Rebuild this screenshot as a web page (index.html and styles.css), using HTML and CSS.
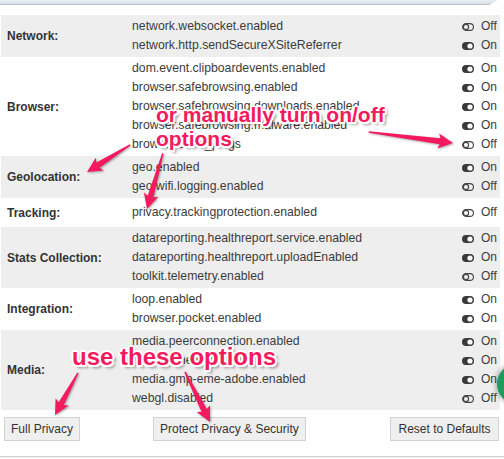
FILE: index.html
```html
<!DOCTYPE html>
<html>
<head>
<meta charset="utf-8">
<link rel="stylesheet" href="styles.css">
</head>
<body>
<div class="topbar"></div>
<div class="panel">
  <div class="section grey">
    <div class="label">Network:</div>
    <div class="rows">
      <div class="row"><span class="pref">network.websocket.enabled</span><span class="state"><svg class="tg" viewBox="0 0 12 8"><rect x="0.6" y="0.6" width="10.8" height="6.8" rx="3.4" fill="none" stroke="#444" stroke-width="1.1"/><circle cx="4" cy="4" r="2.6" fill="none" stroke="#444" stroke-width="1.1"/></svg>Off</span></div>
      <div class="row"><span class="pref">network.http.sendSecureXSiteReferrer</span><span class="state"><svg class="tg" viewBox="0 0 12 8"><rect x="0" y="0" width="12" height="8" rx="4" fill="#3a3a3a"/><circle cx="8" cy="4" r="2.6" fill="#fff"/></svg>On</span></div>
    </div>
  </div>
  <div class="section">
    <div class="label">Browser:</div>
    <div class="rows">
      <div class="row"><span class="pref">dom.event.clipboardevents.enabled</span><span class="state"><svg class="tg" viewBox="0 0 12 8"><rect x="0" y="0" width="12" height="8" rx="4" fill="#3a3a3a"/><circle cx="8" cy="4" r="2.6" fill="#fff"/></svg>On</span></div>
      <div class="row"><span class="pref">browser.safebrowsing.enabled</span><span class="state"><svg class="tg" viewBox="0 0 12 8"><rect x="0" y="0" width="12" height="8" rx="4" fill="#3a3a3a"/><circle cx="8" cy="4" r="2.6" fill="#fff"/></svg>On</span></div>
      <div class="row"><span class="pref">browser.safebrowsing.downloads.enabled</span><span class="state"><svg class="tg" viewBox="0 0 12 8"><rect x="0" y="0" width="12" height="8" rx="4" fill="#3a3a3a"/><circle cx="8" cy="4" r="2.6" fill="#fff"/></svg>On</span></div>
      <div class="row"><span class="pref">browser.safebrowsing.malware.enabled</span><span class="state"><svg class="tg" viewBox="0 0 12 8"><rect x="0" y="0" width="12" height="8" rx="4" fill="#3a3a3a"/><circle cx="8" cy="4" r="2.6" fill="#fff"/></svg>On</span></div>
      <div class="row"><span class="pref">browser.send_pings</span><span class="state"><svg class="tg" viewBox="0 0 12 8"><rect x="0.6" y="0.6" width="10.8" height="6.8" rx="3.4" fill="none" stroke="#444" stroke-width="1.1"/><circle cx="4" cy="4" r="2.6" fill="none" stroke="#444" stroke-width="1.1"/></svg>Off</span></div>
    </div>
  </div>
  <div class="section grey">
    <div class="label">Geolocation:</div>
    <div class="rows">
      <div class="row"><span class="pref">geo.enabled</span><span class="state"><svg class="tg" viewBox="0 0 12 8"><rect x="0" y="0" width="12" height="8" rx="4" fill="#3a3a3a"/><circle cx="8" cy="4" r="2.6" fill="#fff"/></svg>On</span></div>
      <div class="row"><span class="pref">geo.wifi.logging.enabled</span><span class="state"><svg class="tg" viewBox="0 0 12 8"><rect x="0.6" y="0.6" width="10.8" height="6.8" rx="3.4" fill="none" stroke="#444" stroke-width="1.1"/><circle cx="4" cy="4" r="2.6" fill="none" stroke="#444" stroke-width="1.1"/></svg>Off</span></div>
    </div>
  </div>
  <div class="section single">
    <div class="label">Tracking:</div>
    <div class="rows">
      <div class="row"><span class="pref">privacy.trackingprotection.enabled</span><span class="state"><svg class="tg" viewBox="0 0 12 8"><rect x="0.6" y="0.6" width="10.8" height="6.8" rx="3.4" fill="none" stroke="#444" stroke-width="1.1"/><circle cx="4" cy="4" r="2.6" fill="none" stroke="#444" stroke-width="1.1"/></svg>Off</span></div>
    </div>
  </div>
  <div class="section grey">
    <div class="label">Stats Collection:</div>
    <div class="rows">
      <div class="row"><span class="pref">datareporting.healthreport.service.enabled</span><span class="state"><svg class="tg" viewBox="0 0 12 8"><rect x="0" y="0" width="12" height="8" rx="4" fill="#3a3a3a"/><circle cx="8" cy="4" r="2.6" fill="#fff"/></svg>On</span></div>
      <div class="row"><span class="pref">datareporting.healthreport.uploadEnabled</span><span class="state"><svg class="tg" viewBox="0 0 12 8"><rect x="0" y="0" width="12" height="8" rx="4" fill="#3a3a3a"/><circle cx="8" cy="4" r="2.6" fill="#fff"/></svg>On</span></div>
      <div class="row"><span class="pref">toolkit.telemetry.enabled</span><span class="state"><svg class="tg" viewBox="0 0 12 8"><rect x="0.6" y="0.6" width="10.8" height="6.8" rx="3.4" fill="none" stroke="#444" stroke-width="1.1"/><circle cx="4" cy="4" r="2.6" fill="none" stroke="#444" stroke-width="1.1"/></svg>Off</span></div>
    </div>
  </div>
  <div class="section">
    <div class="label">Integration:</div>
    <div class="rows">
      <div class="row"><span class="pref">loop.enabled</span><span class="state"><svg class="tg" viewBox="0 0 12 8"><rect x="0" y="0" width="12" height="8" rx="4" fill="#3a3a3a"/><circle cx="8" cy="4" r="2.6" fill="#fff"/></svg>On</span></div>
      <div class="row"><span class="pref">browser.pocket.enabled</span><span class="state"><svg class="tg" viewBox="0 0 12 8"><rect x="0" y="0" width="12" height="8" rx="4" fill="#3a3a3a"/><circle cx="8" cy="4" r="2.6" fill="#fff"/></svg>On</span></div>
    </div>
  </div>
  <div class="section grey">
    <div class="label">Media:</div>
    <div class="rows">
      <div class="row"><span class="pref">media.peerconnection.enabled</span><span class="state"><svg class="tg" viewBox="0 0 12 8"><rect x="0" y="0" width="12" height="8" rx="4" fill="#3a3a3a"/><circle cx="8" cy="4" r="2.6" fill="#fff"/></svg>On</span></div>
      <div class="row"><span class="pref">media.eme.enabled</span><span class="state"><svg class="tg" viewBox="0 0 12 8"><rect x="0" y="0" width="12" height="8" rx="4" fill="#3a3a3a"/><circle cx="8" cy="4" r="2.6" fill="#fff"/></svg>On</span></div>
      <div class="row"><span class="pref">media.gmp-eme-adobe.enabled</span><span class="state"><svg class="tg" viewBox="0 0 12 8"><rect x="0" y="0" width="12" height="8" rx="4" fill="#3a3a3a"/><circle cx="8" cy="4" r="2.6" fill="#fff"/></svg>On</span></div>
      <div class="row"><span class="pref">webgl.disabled</span><span class="state"><svg class="tg" viewBox="0 0 12 8"><rect x="0.6" y="0.6" width="10.8" height="6.8" rx="3.4" fill="none" stroke="#444" stroke-width="1.1"/><circle cx="4" cy="4" r="2.6" fill="none" stroke="#444" stroke-width="1.1"/></svg>Off</span></div>
    </div>
  </div>
  <div class="buttons">
    <button class="btn">Full Privacy</button>
    <button class="btn mid">Protect Privacy &amp; Security</button>
    <button class="btn reset">Reset to Defaults</button>
  </div>
</div>
<div class="footer"></div>

<div class="green-dot"></div>

<svg class="arrows" width="504" height="459" viewBox="0 0 504 459">
  <g fill="#f31a5e">
    <path transform="translate(87 172) rotate(147.9)" d="M-51 -0.7 L-13 -3 L-15 -7.5 L0 0 L-15 7.5 L-13 3 L-51 0.7 Z"/>
    <path transform="translate(147 209) rotate(105.9)" d="M-58 -0.7 L-13 -3 L-15 -7.5 L0 0 L-15 7.5 L-13 3 L-58 0.7 Z"/>
    <path transform="translate(453 143) rotate(7.46)" d="M-85 -0.7 L-13 -3 L-15 -7.5 L0 0 L-15 7.5 L-13 3 L-85 0.7 Z"/>
    <path transform="translate(55 415) rotate(118.7)" d="M-48 -0.7 L-13 -3 L-15 -7.5 L0 0 L-15 7.5 L-13 3 L-48 0.7 Z"/>
    <path transform="translate(210 422) rotate(63.4)" d="M-56 -0.7 L-13 -3 L-15 -7.5 L0 0 L-15 7.5 L-13 3 L-56 0.7 Z"/>
  </g>
</svg>
<div class="note note1">or manually turn on/off<br>options</div>
<div class="note note2">use these options</div>
</body>
</html>
```

FILE: styles.css
```css
html, body {
  margin: 0;
  padding: 0;
}
body {
  width: 504px;
  height: 459px;
  position: relative;
  overflow: hidden;
  background: #fff;
  font-family: "Liberation Sans", Arial, sans-serif;
  font-size: 12px;
  color: #3c3c3c;
}
.topbar {
  height: 4px;
  background: linear-gradient(#e9eef3, #d6dee7);
  border-bottom: 1px solid #b7c2ce;
  clip-path: polygon(0 0, 498px 0, 489px 100%, 0 100%);
}
.panel {
  padding: 10px 4px 0 1px;
}
.section {
  display: grid;
  grid-template-columns: 131px 1fr;
  padding: 2px 0;
  box-sizing: border-box;
  min-height: 29px;
}
.section.grey {
  background: #eeeeee;
}
.label {
  align-self: center;
  padding-left: 6px;
  font-weight: bold;
  color: #333;
}
.section.single .rows {
  align-self: center;
}
.row {
  display: flex;
  height: 19px;
  line-height: 19px;
  white-space: nowrap;
}
.pref {
  width: 330px;
  font-size: 12.25px;
}
.state {
  display: flex;
  align-items: center;
}
.tg {
  width: 12px;
  height: 8px;
  margin-right: 7px;
}
.buttons {
  display: flex;
  margin-top: 7px;
  padding: 0 1px 0 3px;
}
.btn {
  height: 24px;
  padding: 0 6px;
  border: 1px solid #d2d2d2;
  background: #efefef;
  font-family: "Liberation Sans", Arial, sans-serif;
  font-size: 12px;
  color: #333;
  border-radius: 0;
}
.btn.mid {
  margin-left: 73px;
}
.btn.reset {
  margin-left: auto;
  width: 109px;
}
.footer {
  margin-top: 15px;
  height: 4px;
  border-top: 1px solid #d0d0d0;
  background: #f7f7f7;
}
.green-dot {
  position: absolute;
  left: 497px;
  top: 364px;
  width: 40px;
  height: 40px;
  border-radius: 50%;
  background: #1c9c5c;
  box-shadow: 0 0 4px 2px rgba(0,0,0,0.25);
}
.arrows {
  position: absolute;
  left: 0;
  top: 0;
  filter: drop-shadow(1px 1px 1px rgba(0,0,0,0.35));
}
.note {
  position: absolute;
  font-family: "Liberation Sans", Arial, sans-serif;
  font-weight: bold;
  color: #f31a5e;
  white-space: nowrap;
  text-shadow:
    -1.5px -1.5px 0 #fff, 1.5px -1.5px 0 #fff, -1.5px 1.5px 0 #fff, 1.5px 1.5px 0 #fff,
    0 -2px 0 #fff, 0 2px 0 #fff, -2px 0 0 #fff, 2px 0 0 #fff,
    3px 3px 3px rgba(0,0,0,0.45);
}
.note1 {
  left: 156px;
  top: 103px;
  font-size: 21px;
  line-height: 24px;
}
.note2 {
  left: 72px;
  top: 345px;
  font-size: 24px;
  line-height: 24px;
}
```
